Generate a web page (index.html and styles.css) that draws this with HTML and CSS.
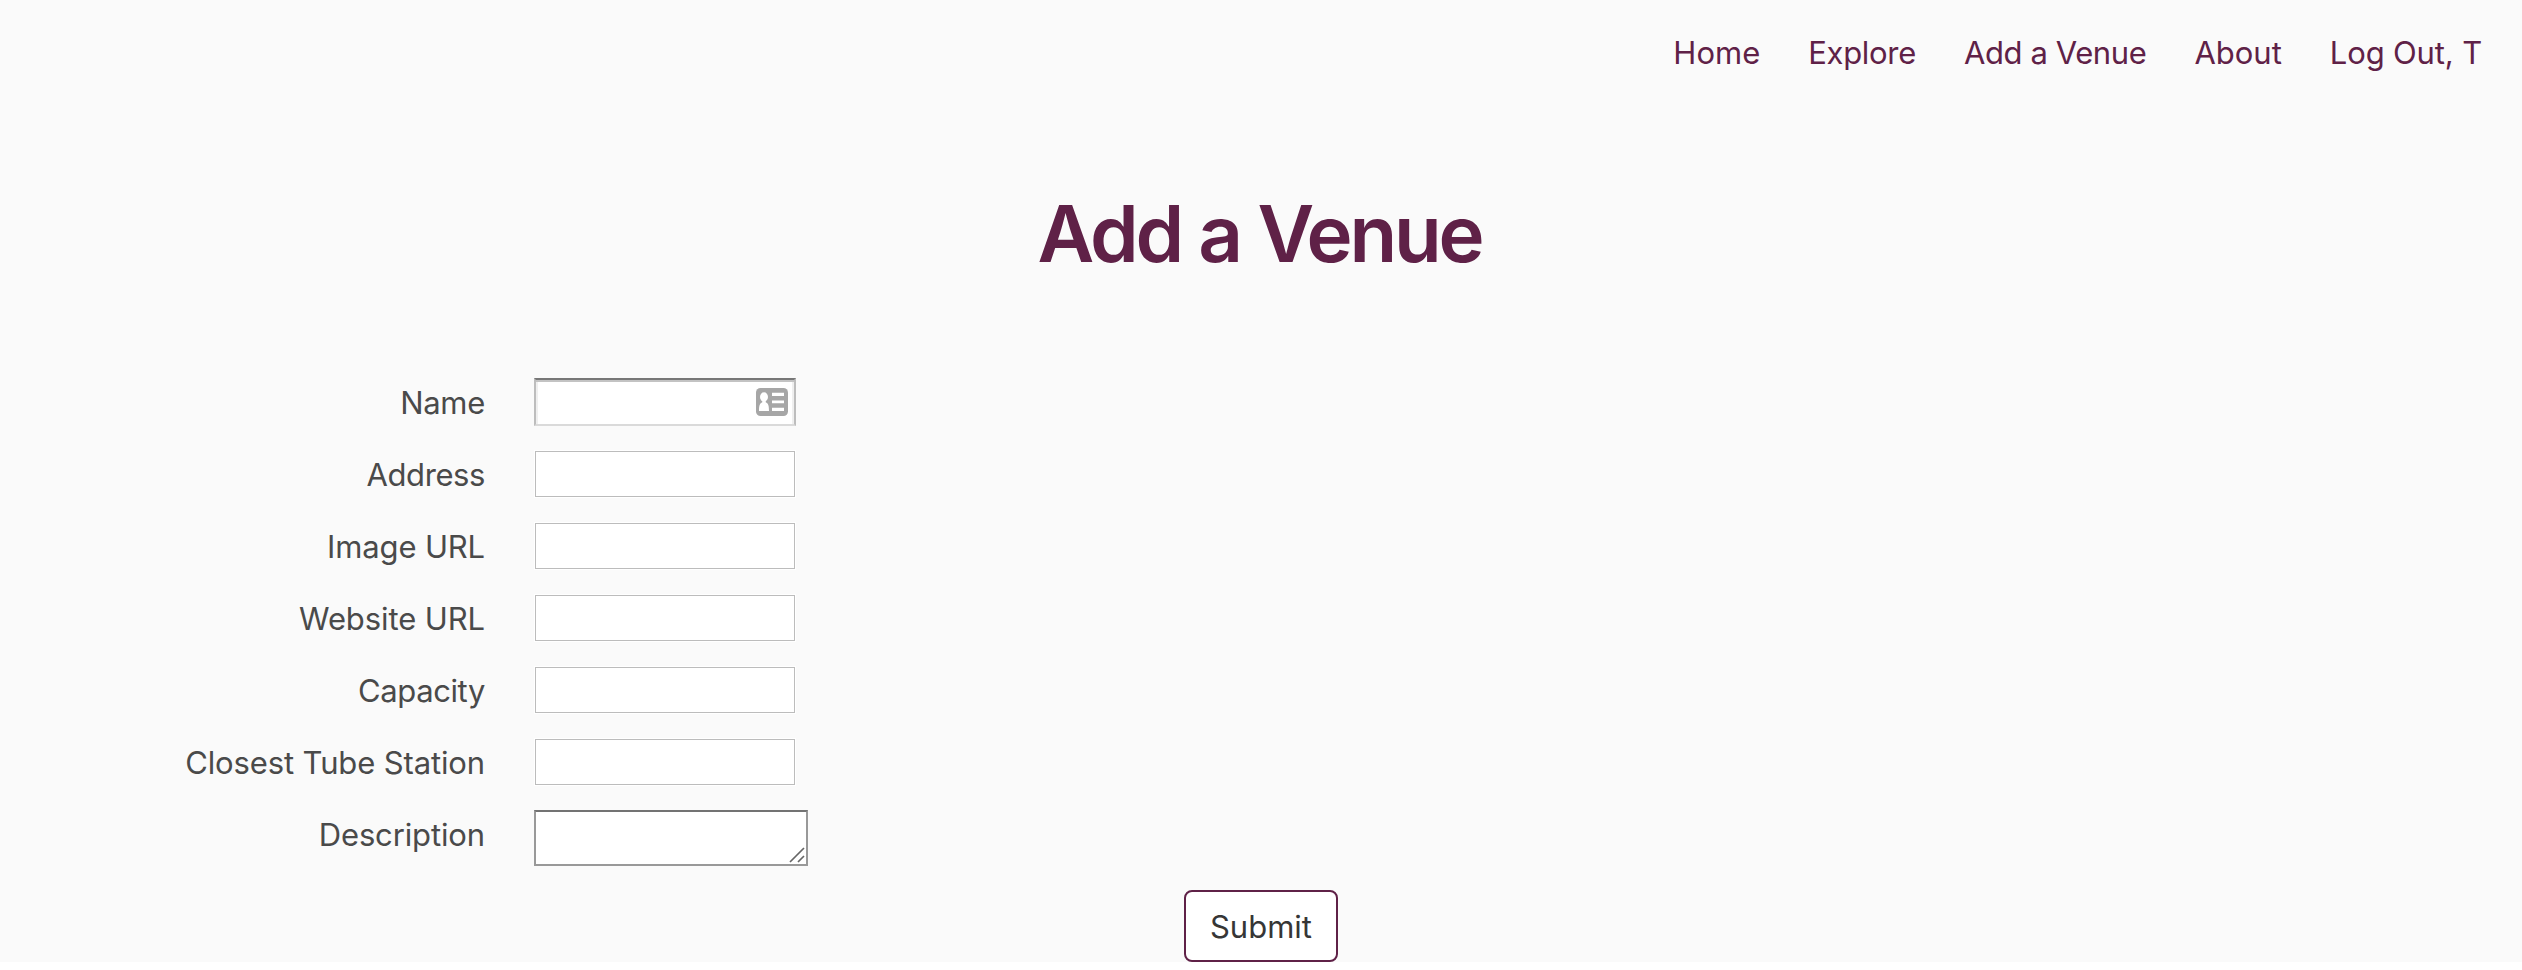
FILE: index.html
```html
<!DOCTYPE html>
<html lang="en">
<head>
<meta charset="utf-8">
<title>Add a Venue</title>
<link rel="stylesheet" href="styles.css">
</head>
<body>
<div class="page">
  <nav class="navbar">
    <a class="nav-link nav-home">Home</a>
    <a class="nav-link nav-explore">Explore</a>
    <a class="nav-link nav-add">Add a Venue</a>
    <a class="nav-link nav-about">About</a>
    <a class="nav-link nav-logout">Log Out, T</a>
  </nav>
  <h1 class="title">Add a Venue</h1>
  <form class="form">
    <div class="row"><label class="label l-name" for="name">Name</label>
      <div class="field field-name"><input class="input-name" id="name" type="text">
        <svg class="card-icon" width="32" height="28" viewBox="0 0 32 28" aria-hidden="true">
          <rect width="32" height="28" rx="4.5" fill="#a6a6a6"/>
          <ellipse cx="8" cy="9" rx="4" ry="4.7" fill="#fff"/>
          <path d="M6.3 12h3.4v2.2c2.500 1 3.300 3.300 3.300 8.800H3c0-5.500.8-7.800 3.300-8.800z" fill="#fff"/>
          <path d="M16 4.700h12v3.200H16zM16 12.400h12v2.900H16zM16 19.700h12v3.200H16z" fill="#fff"/>
        </svg></div></div>
    <div class="row"><label class="label l-address" for="address">Address</label><div class="field"><input class="input" id="address" type="text"></div></div>
    <div class="row"><label class="label l-image" for="image">Image URL</label><div class="field"><input class="input" id="image" type="text"></div></div>
    <div class="row"><label class="label l-website" for="website">Website URL</label><div class="field"><input class="input" id="website" type="text"></div></div>
    <div class="row"><label class="label l-capacity" for="capacity">Capacity</label><div class="field"><input class="input" id="capacity" type="text"></div></div>
    <div class="row"><label class="label l-station" for="station">Closest Tube Station</label><div class="field"><input class="input" id="station" type="text"></div></div>
    <div class="row row-last"><label class="label l-description" for="description">Description</label>
      <div class="area"><textarea class="textarea" id="description"></textarea>
        <svg class="grip" width="16" height="16" viewBox="0 0 16 16" aria-hidden="true"><path d="M1 15L15 1M9 15l6-6" stroke="#666" stroke-width="1.700" fill="none"/></svg>
      </div></div>
    <div class="actions"><button class="submit" type="button">Submit</button></div>
  </form>
</div>
</body>
</html>
```
FILE: styles.css
```css
* { box-sizing: border-box; }
body { margin: 0; background: #fff; font-family: Inter, "Liberation Sans", sans-serif; font-size: 31px; color: #4a4a4a; }
.page { height: 962px; background: #fafafa; }
.navbar { height: 104px; padding: 29px 40px 0 0; display: flex; justify-content: flex-end; gap: 48px; line-height: 48px; }
.nav-link { color: #5f2147; white-space: nowrap; }
.nav-explore { letter-spacing: -0.3px; }
.nav-add { letter-spacing: -0.4px; }
.nav-logout { letter-spacing: -0.15px; }
.title { margin: 0; padding: 82px 3px 0 0; height: 274px; font-size: 78px; line-height: 96px; font-weight: 600; letter-spacing: -3.2px; word-spacing: 1px; text-align: center; color: #5f2147; }
.form { display: flex; flex-direction: column; }
.row { display: flex; gap: 49px; height: 72px; }
.row-last { height: 80px; }
.label { width: 485px; line-height: 48px; padding-top: 1px; text-align: right; white-space: nowrap; }
.l-name { letter-spacing: -0.3px; }
.l-address, .l-capacity { letter-spacing: -0.4px; }
.l-image { letter-spacing: -0.15px; }
.l-website { letter-spacing: -0.1px; }
.l-station, .l-description { letter-spacing: -0.13px; }
.field { position: relative; width: 262px; height: 48px; background: #fff; padding: 1px; }
.field-name { padding: 0; }
.input, .input-name { display: block; width: 100%; height: 100%; margin: 0; padding: 0 6px; border-radius: 0; outline: 0; background: #fff; font: inherit; }
.input { border: 1px solid #bcbcbc; }
.input-name { border: 2px solid #bdbdbd; border-top-color: #777; border-bottom-color: #dadada; box-shadow: inset 0 2px #c3c3c3, inset 2px 0 #efefef, inset -2px 0 #efefef; }
.card-icon { position: absolute; right: 8px; top: 10px; }
.area { position: relative; width: 274px; height: 56px; }
.textarea { display: block; width: 100%; height: 100%; margin: 0; resize: none; overflow: hidden; outline: 0; border: 2px solid #999; border-top-color: #737373; border-radius: 0; background: #fff; font: inherit; }
.grip { position: absolute; right: 3px; bottom: 3px; }
.actions { display: flex; justify-content: center; padding-top: 0; }
.submit { width: 154px; height: 72px; padding: 1px 0 0; border: 2px solid #5f2147; border-radius: 8px; background: #fff; color: #363636; font: inherit; line-height: 68px; }
```
